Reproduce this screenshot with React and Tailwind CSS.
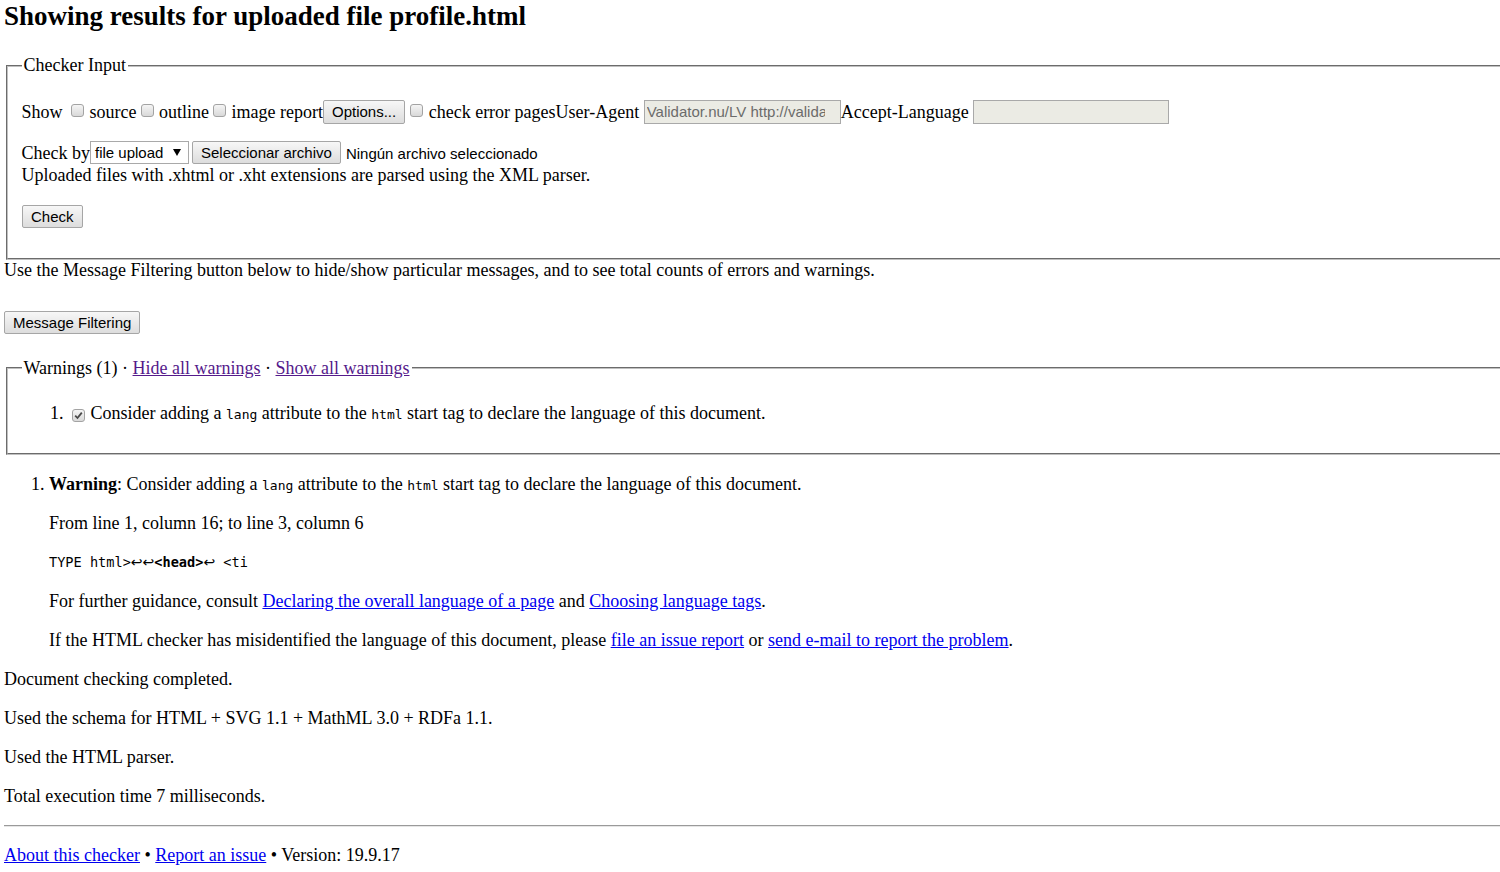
import React from "react";

// grey Windows-style checkbox
function Box({ checked = false, className = "ml-[4px] mt-[4px] align-top" }) {
  return (
    <span
      className={
        "mr-[1px] inline-flex h-[13px] w-[13px] items-center justify-center rounded-[3px] border border-[#a3a3a3] bg-linear-to-b from-[#f5f5f5] to-[#d9d9d9] " +
        className
      }
    >
      {checked && (
        <svg width="9" height="9" viewBox="0 0 9 9">
          <path d="M1.2 4.6 L3.5 7 L7.8 1.6" fill="none" stroke="#4a4a4a" strokeWidth="1.8" />
        </svg>
      )}
    </span>
  );
}

function Btn({ children, className = "" }) {
  return (
    <span
      className={
        "inline-block rounded-[2px] border border-[#a6a6a6] bg-linear-to-b from-[#f7f7f7] to-[#dddddd] align-top font-['Liberation_Sans',Arial,sans-serif] text-black " +
        className
      }
    >
      {children}
    </span>
  );
}

function Field({ width, text = "" }) {
  return (
    <span
      className={
        "inline-block h-[24px] whitespace-nowrap border border-[#a9a9a9] bg-[#ebebe4] pl-[2px] align-top font-['Liberation_Sans',Arial,sans-serif] text-[15px] leading-[22px] text-[#6b6b6b] " +
        width
      }
    >
      <span className="block w-[178px] overflow-hidden">{text}</span>
    </span>
  );
}

function Code({ children }) {
  return (
    <code className="font-['DejaVu_Sans_Mono','Liberation_Mono',monospace] text-[13px] leading-[1]">{children}</code>
  );
}

// line-break marker shown in the extract
function Ret() {
  return <span className="font-['DejaVu_Sans',sans-serif] text-[14px] leading-[1]">↩</span>;
}

export default function App() {
  return (
    <div className="w-full overflow-hidden bg-white">
      <div className="w-[1530px] px-[4px] pb-[8px] font-['Liberation_Serif','Times_New_Roman',serif] text-[18px] leading-[21px] text-black">
        <h1 className="pt-[1px] text-[27px] font-bold leading-[30.5px]">
          Showing results for uploaded file profile.html
        </h1>

        {/* Checker input form */}
        <fieldset className="mx-[2px] mt-[23.5px] border-2 border-[#c0c0c0] px-[13.5px] pt-[6.3px] pb-[11.25px] [border-style:groove]">
          <legend className="px-[2px]">Checker Input</legend>

          <div className="mt-[18px] h-[24px] whitespace-nowrap leading-[24px]">
            Show <Box /> source<Box /> outline<Box /> image report
            <Btn className="h-[24px] px-[8px] text-[15px] leading-[22px]">Options...</Btn>
            <Box className="ml-[5px] mt-[4px] align-top" /> check error pagesUser-Agent{" "}
            <Field width="w-[197px]" text="Validator.nu/LV http://validator.w3.org/services" />
            Accept-Language <Field width="w-[196px]" />
          </div>

          <div className="mt-[17px] h-[24px] whitespace-nowrap leading-[24px]">
            Check by
            <span className="inline-flex h-[23px] w-[99px] items-center justify-between border border-[#a9a9a9] bg-white pr-[7px] pl-[4px] align-top font-['Liberation_Sans',Arial,sans-serif] text-[15px]">
              <span>file upload</span>
              <svg width="8" height="7" viewBox="0 0 8 7">
                <path d="M0 0 H8 L4 7 Z" fill="#000" />
              </svg>
            </span>
            <Btn className="ml-[3px] h-[23px] px-[8px] text-[15px] leading-[21px]">Seleccionar archivo</Btn>
            <span className="ml-[5px] font-['Liberation_Sans',Arial,sans-serif] text-[15px]">
              Ningún archivo seleccionado
            </span>
          </div>
          <div>Uploaded files with .xhtml or .xht extensions are parsed using the XML parser.</div>

          <div className="mt-[19px] mb-[18px] h-[23px]">
            <Btn className="h-[23px] px-[8.5px] text-[15px] leading-[21px]">Check</Btn>
          </div>
        </fieldset>

        <p>
          Use the Message Filtering button below to hide/show particular messages, and to see total counts of errors
          and warnings.
        </p>

        <div className="mt-[30px] h-[23px]">
          <Btn className="h-[23px] px-[8px] text-[15px] leading-[21px]">Message Filtering</Btn>
        </div>

        {/* Warnings summary */}
        <fieldset className="mx-[2px] mt-[24px] border-2 border-[#c0c0c0] px-[13.5px] pt-[6.3px] pb-[11.25px] [border-style:groove]">
          <legend className="px-[2px]">
            Warnings (1) ·{" "}
            <a href="#" className="text-[#551a8b] underline">
              Hide all warnings
            </a>{" "}
            ·{" "}
            <a href="#" className="text-[#551a8b] underline">
              Show all warnings
            </a>
          </legend>
          <ol className="my-[18px] list-decimal pl-[46.5px]">
            <li>
              <Box checked className="ml-[4px] align-[-1px]" /> Consider adding a <Code>lang</Code> attribute to the{" "}
              <Code>html</Code> start tag to declare the language of this document.
            </li>
          </ol>
        </fieldset>

        {/* Messages */}
        <ol className="mt-[19px] mb-[18px] list-decimal pl-[45px]">
          <li>
            <div>
              <strong>Warning</strong>: Consider adding a <Code>lang</Code> attribute to the <Code>html</Code> start
              tag to declare the language of this document.
            </div>
            <p className="mt-[18px]">From line 1, column 16; to line 3, column 6</p>
            <p className="mt-[18px] h-[21px] whitespace-pre font-['DejaVu_Sans_Mono','Liberation_Mono',monospace] text-[13.6px] leading-[21px]">
              TYPE html&gt;
              <Ret />
              <Ret />
              <b>&lt;head&gt;</b>
              <Ret /> &lt;ti
            </p>
            <p className="mt-[18px]">
              For further guidance, consult{" "}
              <a href="#" className="text-[#0000ee] underline">
                Declaring the overall language of a page
              </a>{" "}
              and{" "}
              <a href="#" className="text-[#0000ee] underline">
                Choosing language tags
              </a>
              .
            </p>
            <p className="mt-[18px]">
              If the HTML checker has misidentified the language of this document, please{" "}
              <a href="#" className="text-[#0000ee] underline">
                file an issue report
              </a>{" "}
              or{" "}
              <a href="#" className="text-[#0000ee] underline">
                send e-mail to report the problem
              </a>
              .
            </p>
          </li>
        </ol>

        <p>Document checking completed.</p>
        <p className="mt-[18px]">Used the schema for HTML + SVG 1.1 + MathML 3.0 + RDFa 1.1.</p>
        <p className="mt-[18px]">Used the HTML parser.</p>
        <p className="mt-[18px]">Total execution time 7 milliseconds.</p>

        <hr className="mt-[18px] border-t border-b border-t-[#9a9a9a] border-b-[#e6e6e6]" />

        <p className="mt-[18px]">
          <a href="#" className="text-[#0000ee] underline">
            About this checker
          </a>{" "}
          •{" "}
          <a href="#" className="text-[#0000ee] underline">
            Report an issue
          </a>{" "}
          • Version: 19.9.17
        </p>
      </div>
    </div>
  );
}
